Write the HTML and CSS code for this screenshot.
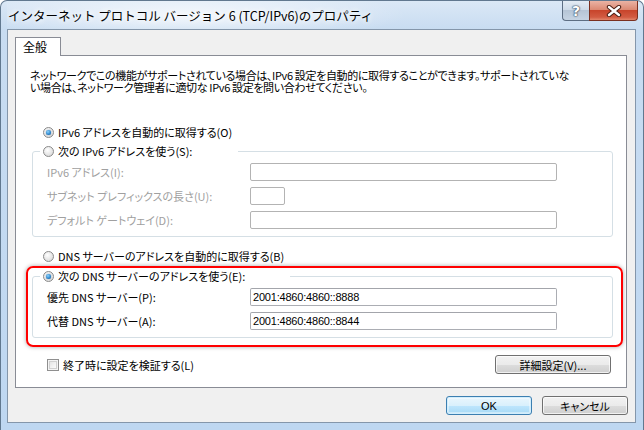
FILE: index.html
```html
<!DOCTYPE html>
<html lang="ja">
<head>
<meta charset="utf-8">
<title>インターネット プロトコル バージョン 6 (TCP/IPv6)のプロパティ</title>
<link rel="stylesheet" href="styles.css">
</head>
<body>
<div class="window">
  <div class="titlebar">
    <div class="title">インターネット プロトコル バージョン 6 (TCP/IPv6)のプロパティ</div>
    <div class="caption-btns">
      <div class="cap help">?</div>
      <div class="cap close">
        <svg width="18" height="12" viewBox="0 0 18 12"><path d="M4 2 L14 10 M14 2 L4 10" stroke="#4a1d12" stroke-width="4.4" stroke-linecap="round" fill="none"/><path d="M4 2 L14 10 M14 2 L4 10" stroke="#ffffff" stroke-width="2.4" stroke-linecap="round" fill="none"/></svg>
      </div>
    </div>
  </div>
  <div class="client">
    <div class="tabstrip">
      <div class="tab">全般</div>
      <div class="tab-fill"></div>
    </div>
    <div class="page">
      <p class="desc">ネットワークでこの機能がサポートされている場合は、IPv6 設定を自動的に取得することができます。サポートされていな<br>い場合は、ネットワーク管理者に適切な IPv6 設定を問い合わせてください。</p>

      <div class="radio-row first"><span class="radio checked"></span><span>IPv6 アドレスを自動的に取得する(O)</span></div>

      <fieldset class="group ipv6">
        <legend class="legend w-ipv6"><span class="radio"></span><span>次の IPv6 アドレスを使う(S):</span></legend>
        <div class="grid">
          <span class="lbl disabled">IPv6 アドレス(I):</span><span class="input"></span>
          <span class="lbl disabled">サブネット プレフィックスの長さ(U):</span><span class="input short"></span>
          <span class="lbl disabled">デフォルト ゲートウェイ(D):</span><span class="input"></span>
        </div>
      </fieldset>

      <div class="radio-row dns-auto"><span class="radio"></span><span>DNS サーバーのアドレスを自動的に取得する(B)</span></div>

      <div class="highlight">
        <fieldset class="group dns">
          <legend class="legend w-dns"><span class="radio checked"></span><span>次の DNS サーバーのアドレスを使う(E):</span></legend>
          <div class="grid">
            <span class="lbl">優先 DNS サーバー(P):</span><span class="input val">2001:4860:4860::8888</span>
            <span class="lbl">代替 DNS サーバー(A):</span><span class="input val">2001:4860:4860::8844</span>
          </div>
        </fieldset>
      </div>

      <div class="check-row">
        <span class="checkbox"></span><span class="check-label">終了時に設定を検証する(L)</span>
        <span class="btn advanced">詳細設定(V)...</span>
      </div>
    </div>
    <div class="dlg-btns">
      <span class="btn ok">OK</span>
      <span class="btn">キャンセル</span>
    </div>
  </div>
</div>
</body>
</html>
```
FILE: styles.css
```css
* { box-sizing: border-box; }
html, body { margin: 0; padding: 0; width: 644px; height: 430px; overflow: hidden; background: #ffffff; }
body {
  font-family: "Noto Sans CJK JP", "Noto Sans", sans-serif;
  font-size: 11px;
  color: #000;
  font-feature-settings: "palt";
}

.window {
  width: 644px;
  height: 430px;
  display: flex;
  flex-direction: column;
  border: 1px solid #61788f;
  border-bottom: none;
  border-radius: 7px 7px 0 0;
  background: linear-gradient(to bottom, #dbe8f6 0px, #c8dcf1 28px, #bed7f1 100%);
  padding: 0 7px 7px 6px;
}

.titlebar {
  height: 28px;
  display: flex;
  align-items: flex-start;
  background: radial-gradient(ellipse 220px 26px at 180px 14px, rgba(255,255,255,0.75), rgba(255,255,255,0) 100%);
}
.title {
  flex: 1;
  align-self: center;
  padding-left: 1px;
  font-size: 12.5px;
  font-feature-settings: normal;
  letter-spacing: 0px;
  white-space: nowrap;
  text-shadow: 0 0 6px #fff, 0 0 6px #fff;
}
.caption-btns { display: flex; margin-right: -2px; }
.cap {
  height: 20px;
  display: flex;
  align-items: center;
  justify-content: center;
  border: 1px solid #5d6e83;
  border-top: none;
}
.help {
  width: 27px;
  border-radius: 0 0 0 4px;
  border-right: none;
  background: linear-gradient(to bottom, #e3ebf4 0%, #cfdbe8 45%, #b6c5d6 50%, #c6d4e3 100%);
  color: #fff;
  font-family: "DejaVu Sans", sans-serif;
  font-weight: bold;
  font-size: 14px;
  text-shadow: 0 0 1px #33475e, 0 0 1px #33475e, 0 0 2px #33475e;
}
.close {
  width: 49px;
  border-radius: 0 0 4px 0;
  border-color: #7a3020;
  background: linear-gradient(to bottom, #eab3a4 0%, #dc8a74 45%, #c8452c 50%, #d25b42 85%, #e2866c 100%);
}

.client {
  flex: 1;
  display: flex;
  flex-direction: column;
  background: #f0f0f0;
  border: 1px solid #8496aa;
  padding: 7px 8px 0 7px;
}

.tabstrip { display: flex; height: 19px; }
.tab {
  width: 46px;
  height: 19px;
  background: #fff;
  border: 1px solid #898c95;
  border-bottom: none;
  font-size: 12px;
  line-height: 17px;
  padding-left: 7px;
  font-feature-settings: normal;
}
.tab-fill { flex: 1; border-bottom: 1px solid #898c95; }

.page {
  background: #fff;
  border: 1px solid #898c95;
  border-top: none;
  padding: 13px 3px 13px 10px;
  display: flex;
  flex-direction: column;
}

.desc {
  margin: 0 0 0 4px;
  line-height: 12px;
  white-space: nowrap;
  letter-spacing: -0.35px;
}

.radio-row { display: flex; align-items: center; height: 16px; margin-left: 17px; white-space: nowrap; }
.radio-row.first { margin-top: 31px; }
.radio-row.dns-auto { margin-top: 11px; }

.radio {
  width: 11px;
  height: 11px;
  border-radius: 50%;
  border: 1px solid #8a8a8a;
  background: radial-gradient(circle at 40% 35%, #ffffff 0%, #e6e6e6 55%, #cfcfcf 100%);
  margin-right: 4px;
  flex: none;
  display: flex;
  align-items: center;
  justify-content: center;
}
.radio.checked::after {
  content: "";
  width: 5px;
  height: 5px;
  border-radius: 50%;
  background: radial-gradient(circle at 40% 35%, #8fd2fb 0%, #2f8ad0 55%, #0d4a82 100%);
  box-shadow: 0 0 1px #0d3f70;
}

.group {
  margin: 0;
  border: 1px solid #d5dfe5;
  border-radius: 3px;
  padding: 4px 10px 7px 14px;
  min-width: 0;
}
.group.ipv6 { margin: 3px 10px 0 6px; }
.legend {
  display: flex;
  align-items: center;
  height: 16px;
  padding: 0 0 0 3px;
  margin-left: -7px;
  white-space: nowrap;
  background: #fff;
}
.w-ipv6 { width: 198px; }
.w-dns { width: 250px; }

.grid {
  display: grid;
  grid-template-columns: 203px 307px;
  row-gap: 6px;
  align-items: center;
}
.lbl { white-space: nowrap; }
.lbl.disabled { color: #a0a0a0; }
.input {
  height: 18px;
  border: 1px solid #abadb3;
  border-top-color: #a3a5ab;
  border-radius: 2px;
  background: #fff;
  font-family: "Liberation Sans", sans-serif;
  font-size: 11px;
  line-height: 16px;
  padding-left: 2px;
  letter-spacing: -0.2px;
}
.ipv6 .input { border-color: #b3b3b3; }
.input.short { width: 35px; }

.highlight {
  margin-top: 2px;
  border: 2px solid #ff0000;
  border-radius: 7px;
  padding: 0 8px 7px 4px;
  box-shadow: 0 0 4px rgba(0,0,0,0.35);
}

.check-row {
  display: flex;
  align-items: center;
  height: 19px;
  margin-top: 8px;
  margin-left: 21px;
  margin-right: 12px;
}
.checkbox {
  width: 12px;
  height: 12px;
  border: 1px solid #8f8f8f;
  background: linear-gradient(135deg, #dcdcdc 0%, #f4f4f4 60%, #ffffff 100%);
  box-shadow: inset 0 0 0 1px #f4f4f4, inset 0 0 0 2px #d0d0d0;
  margin-right: 4px;
  flex: none;
}
.check-label { flex: 1; white-space: nowrap; }

.btn {
  display: flex;
  align-items: center;
  justify-content: center;
  height: 19px;
  border: 1px solid #707070;
  border-radius: 3px;
  background: linear-gradient(to bottom, #f2f2f2 0%, #ebebeb 50%, #dddddd 51%, #cfcfcf 100%);
  box-shadow: inset 0 0 0 1px rgba(255,255,255,0.7);
  font-size: 11px;
  white-space: nowrap;
}
.advanced { width: 116px; }

.dlg-btns {
  display: flex;
  justify-content: flex-end;
  gap: 10px;
  margin-top: 8px;
  margin-right: -1px;
}
.dlg-btns .btn { width: 86px; }
.btn.ok {
  border-color: #3c7fb1;
  background: linear-gradient(to bottom, #eaf6fd 0%, #d9f0fc 50%, #bee6fd 51%, #a7d9f5 100%);
  box-shadow: inset 0 0 0 1px #d2eefd, inset 0 0 0 2px rgba(255,255,255,0.4);
  font-family: "Liberation Sans", sans-serif;
}
```
